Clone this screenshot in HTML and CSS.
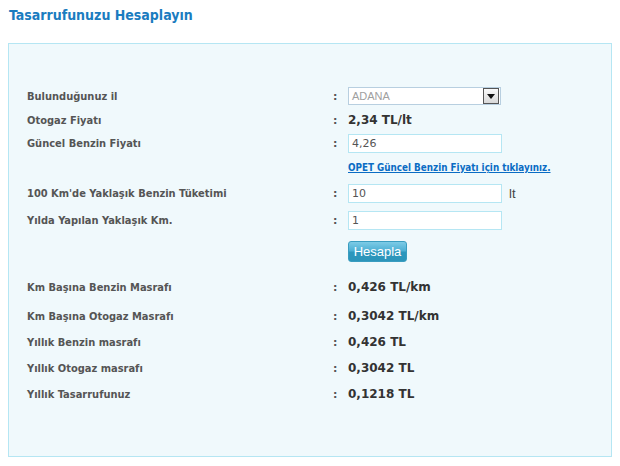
FILE: index.html
```html
<!DOCTYPE html>
<html lang="tr">
<head>
<meta charset="utf-8">
<title>Tasarrufunuzu Hesaplayın</title>
<link rel="stylesheet" href="styles.css">
</head>
<body>
<h1 class="title">Tasarrufunuzu Hesaplayın</h1>
<div class="panel">
  <div class="row r1">
    <span class="label">Bulunduğunuz il</span><span class="colon">:</span>
    <div class="select"><span class="select-text">ADANA</span><span class="select-arrow"><svg width="8" height="5" viewBox="0 0 8 5"><path d="M0 0H8L4 5Z" fill="#111"/></svg></span></div>
  </div>
  <div class="row r2">
    <span class="label">Otogaz Fiyatı</span><span class="colon">:</span>
    <span class="value">2,34 TL/lt</span>
  </div>
  <div class="row r3">
    <span class="label">Güncel Benzin Fiyatı</span><span class="colon">:</span>
    <div class="input">4,26</div>
  </div>
  <div class="row r4">
    <span class="label"></span><span class="colon"></span>
    <a class="link" href="#">OPET Güncel Benzin Fiyatı için tıklayınız.</a>
  </div>
  <div class="row r5">
    <span class="label">100 Km'de Yaklaşık Benzin Tüketimi</span><span class="colon">:</span>
    <div class="input">10</div><span class="unit">lt</span>
  </div>
  <div class="row r6">
    <span class="label">Yılda Yapılan Yaklaşık Km.</span><span class="colon">:</span>
    <div class="input">1</div>
  </div>
  <div class="row r7">
    <span class="label"></span><span class="colon"></span>
    <button class="btn">Hesapla</button>
  </div>
  <div class="row res res-first">
    <span class="label">Km Başına Benzin Masrafı</span><span class="colon">:</span>
    <span class="value">0,426 TL/km</span>
  </div>
  <div class="row res res-second">
    <span class="label">Km Başına Otogaz Masrafı</span><span class="colon">:</span>
    <span class="value">0,3042 TL/km</span>
  </div>
  <div class="row res">
    <span class="label">Yıllık Benzin masrafı</span><span class="colon">:</span>
    <span class="value">0,426 TL</span>
  </div>
  <div class="row res">
    <span class="label">Yıllık Otogaz masrafı</span><span class="colon">:</span>
    <span class="value">0,3042 TL</span>
  </div>
  <div class="row res">
    <span class="label">Yıllık Tasarrufunuz</span><span class="colon">:</span>
    <span class="value">0,1218 TL</span>
  </div>
</div>
</body>
</html>
```
FILE: styles.css
```css
html, body {
  margin: 0;
  padding: 0;
  background: #ffffff;
}
body {
  font-family: "DejaVu Sans", sans-serif;
  color: #555;
}
.title {
  margin: 0;
  padding: 7px 0 0 9px;
  height: 43px;
  box-sizing: border-box;
  font-family: "DejaVu Sans Condensed", "DejaVu Sans", sans-serif;
  font-size: 14px;
  font-weight: bold;
  color: #1a7cc0;
  line-height: 17px;
}
.panel {
  margin: 0 0 0 8px;
  width: 604px;
  height: 414px;
  box-sizing: border-box;
  border: 1px solid #b5e6f3;
  background: #f0f9fc;
  padding-top: 40px;
  padding-left: 18px;
}
.row {
  display: flex;
  align-items: center;
  height: 24px;
}
.r3 { height: 23px; }
.r4 { height: 25px; }
.r5 { height: 26px; }
.r6 { height: 29px; }
.r7 { height: 33px; }
.res { height: 26px; }
.res-first { margin-top: 6px; }
.res-second { margin-top: 3px; }
.label {
  width: 306px;
  flex: none;
  font-family: "DejaVu Sans Condensed", "DejaVu Sans", sans-serif;
  font-size: 11px;
  font-weight: bold;
  color: #555;
}
.colon {
  width: 15px;
  flex: none;
  font-size: 11px;
  font-weight: bold;
  color: #555;
}
.value {
  font-size: 12px;
  font-weight: bold;
  color: #333;
}
.select {
  width: 153px;
  height: 18px;
  box-sizing: border-box;
  border: 1px solid #b8cfe0;
  background: #fff;
  display: flex;
  align-items: center;
  justify-content: space-between;
  padding: 0 1px 0 3px;
}
.select-text {
  font-family: "Liberation Sans", Arial, sans-serif;
  font-size: 11px;
  color: #a0a0a0;
}
.select-arrow {
  width: 16px;
  height: 16px;
  box-sizing: border-box;
  border: 1px solid #555;
  background: linear-gradient(#fafafa, #d8d8d8);
  display: flex;
  align-items: center;
  justify-content: center;
}
.input {
  width: 154px;
  height: 19px;
  box-sizing: border-box;
  border: 1px solid #b5e6f3;
  background: #fff;
  padding: 0 3px;
  font-size: 11px;
  line-height: 17px;
  color: #555;
}
.unit {
  margin-left: 7px;
  font-family: "Liberation Sans", Arial, sans-serif;
  font-size: 13px;
  color: #444;
}
.link {
  font-family: "DejaVu Sans Condensed", "DejaVu Sans", sans-serif;
  font-size: 9.8px;
  font-weight: bold;
  color: #0a6cc4;
  text-decoration: underline;
}
.btn {
  width: 59px;
  height: 21px;
  border: 1px solid #3a9dc0;
  border-radius: 3px;
  background: linear-gradient(#7dcbe6 0%, #4fb0d4 45%, #2c97bd 55%, #2c95ba 100%);
  color: #fff;
  font-family: "Liberation Sans", Arial, sans-serif;
  font-size: 13px;
  padding: 0;
  text-align: center;
}
```
